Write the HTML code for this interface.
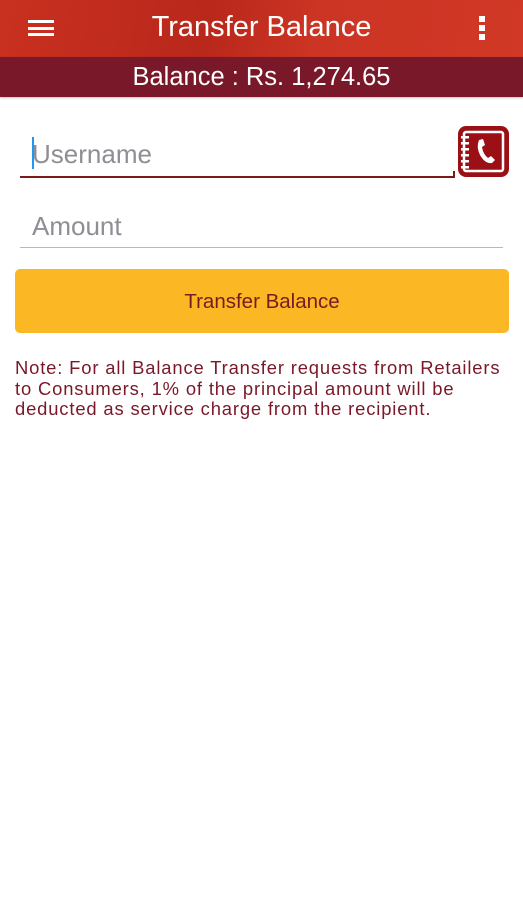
<!DOCTYPE html>
<html><head><meta charset="utf-8"><style>
*{margin:0;padding:0;box-sizing:border-box}
body{width:523px;height:900px;background:#fff;font-family:"Liberation Sans",sans-serif;position:relative;overflow:hidden}
.hdr{position:absolute;left:0;top:0;width:523px;height:57px;background:linear-gradient(100deg,#c9301f 0%,#b9281c 40%,#cc3423 60%,#d13826 100%)}
.hdr .t{position:absolute;left:0;right:0;top:11px;text-align:center;color:#fff;font-size:29px}
.menu{position:absolute;left:28px;top:20px;width:26px;height:16px;border-top:3px solid #fff;border-bottom:3px solid #fff}
.menu:after{content:"";position:absolute;left:0;right:0;top:3.5px;height:3px;background:#fff}
.dots{position:absolute;left:479px;top:16px;width:6px}
.dots i{display:block;width:6px;height:6px;background:#fff;margin-bottom:3px}
.bal{position:absolute;left:0;top:57px;width:523px;height:40px;background:#791828;color:#fff;font-size:25.5px;text-align:center;line-height:40px;box-shadow:0 1px 2px rgba(0,0,0,.25)}
.f{position:absolute;font-size:26px;color:#8e8e96}
.u{left:20px;top:139px;width:433px;height:39px;border-bottom:2px solid #7a1a1a;padding-left:12px}
.u:after{content:"";position:absolute;right:-2px;bottom:-2px;width:2px;height:7px;background:#7a1a1a}
.u:before{content:"";position:absolute;left:12px;top:-2px;width:2px;height:32px;background:#2196f3}
.a{left:20px;top:211px;width:483px;height:37px;border-bottom:1px solid #b8b8b8;padding-left:12px}
.ic{position:absolute;left:458px;top:126px}
.btn{position:absolute;left:15px;top:269px;width:494px;height:64px;background:#fcb824;border-radius:5px;color:#7a1a22;font-size:20.5px;text-align:center;line-height:66px}
.note{position:absolute;left:15px;top:358px;width:510px;white-space:nowrap;color:#7a1828;font-size:18.4px;line-height:20.5px;letter-spacing:0.85px}
</style></head><body>
<div class="hdr"><div class="menu"></div><div class="t">Transfer Balance</div><div class="dots"><i></i><i></i><i></i></div></div>
<div class="bal">Balance : Rs. 1,274.65</div>
<div class="f u">Username</div>
<div class="f a">Amount</div>
<svg class="ic" width="51" height="51" viewBox="0 0 51 51">
<rect x="0" y="0" width="51" height="51" rx="8" fill="#9a1015"/>
<rect x="6" y="6" width="39" height="39" rx="2" fill="none" stroke="#fff" stroke-width="2.5"/>
<g fill="#fff"><rect x="3" y="10" width="8" height="2.5"/><rect x="3" y="16" width="8" height="2.5"/><rect x="3" y="22" width="8" height="2.5"/><rect x="3" y="28" width="8" height="2.5"/><rect x="3" y="34" width="8" height="2.5"/><rect x="3" y="40" width="8" height="2.5"/></g>
<path d="M21 14 L25 13 L27 19 L24 21 Q25 28 30 32 L33 30 L37 34 L34 37 Q27 38 22 29 Q18 21 21 14Z" fill="#fff"/>
</svg>
<div class="btn">Transfer Balance</div>
<div class="note">Note: For all Balance Transfer requests from Retailers<br>to Consumers, 1% of the principal amount will be<br>deducted as service charge from the recipient.</div>
</body></html>
